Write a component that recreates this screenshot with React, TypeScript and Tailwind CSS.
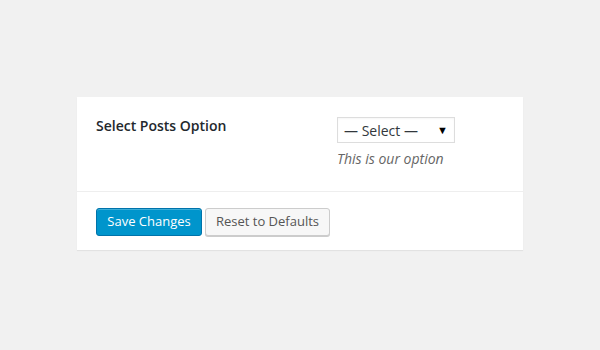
export default function App() {
  return (
    <div
      className="min-h-[350px] w-[600px] bg-[#f1f1f1] pl-[77px] pt-[97px]"
      style={{ fontFamily: '"Open Sans", "Noto Sans", sans-serif' }}
    >
      <div className="w-[446px] bg-white shadow-[0_1px_1px_rgba(0,0,0,0.06)]">
        <div className="flex h-[95px] border-b border-[#eeeeee] pl-[19px] pt-[19px]">
          <div className="w-[241px] text-[14px] font-semibold leading-[20px] text-[#23282d]">
            Select Posts Option
          </div>
          <div className="flex flex-col pt-[1px]">
            <div className="flex h-[26px] w-[118px] items-center justify-between border border-[#dddddd] bg-white pl-[6px] pr-[6px] text-[14px] text-[#32373c] shadow-[inset_0_1px_2px_rgba(0,0,0,0.04)]">
              <span>— Select —</span>
              <span className="text-[11px] text-black">▼</span>
            </div>
            <p className="mt-[6px] text-[14px] italic leading-[20px] text-[#666666]">
              This is our option
            </p>
          </div>
        </div>
        <div className="flex gap-[3px] pb-[14px] pl-[19px] pt-[16px]">
          <button className="h-[28px] w-[106px] rounded-[3px] border border-[#0073aa] bg-[#0095cc] text-[13px] text-white shadow-[inset_0_1px_0_rgba(120,200,230,0.5)]">
            Save Changes
          </button>
          <button className="h-[28px] w-[125px] rounded-[3px] border border-[#cccccc] bg-[#f7f7f7] text-[13px] text-[#555555] shadow-[0_1px_0_#cccccc]">
            Reset to Defaults
          </button>
        </div>
      </div>
    </div>
  );
}
